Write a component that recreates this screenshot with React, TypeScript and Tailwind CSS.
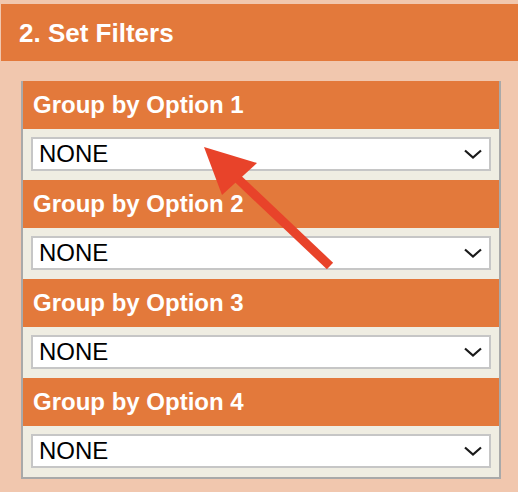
const groups = [1, 2, 3, 4];

function Chevron() {
  return (
    <svg width="18" height="10" viewBox="0 0 18 10" className="shrink-0">
      <path d="M1 1.5 L9 8.5 L17 1.5" fill="none" stroke="#1a1a1a" strokeWidth="2.2" />
    </svg>
  );
}

export default function App() {
  return (
    <div
      className="relative w-[518px] h-[492px] overflow-hidden bg-[#f1c7ae]"
      style={{ fontFamily: '"Liberation Sans", Arial, sans-serif' }}
    >
      <div className="pt-[4px] pl-[1px]">
        <div className="h-[57px] bg-[#e3793b] flex items-center pl-[18px]">
          <h2 className="text-[26px] font-bold text-white leading-none">2. Set Filters</h2>
        </div>
      </div>

      <div className="pt-[20px] pl-[21px]">
        <div className="w-[480px] border-x-2 border-b-2 border-[#a9a9a9]">
          {groups.map((n) => (
            <div key={n}>
              <div className="h-[48px] bg-[#e3793b] flex items-center pl-[10px]">
                <span className="text-[24px] font-bold text-white leading-none">Group by Option {n}</span>
              </div>
              <div className="bg-[#efede2] px-[8px] pt-[8px] pb-[9px]">
                <div className="h-[34px] bg-white border-2 border-[#c6c6c6] flex items-center justify-between pl-[6px] pr-[7px]">
                  <span className="text-[24px] text-black leading-none">NONE</span>
                  <Chevron />
                </div>
              </div>
            </div>
          ))}
        </div>
      </div>

      <svg className="absolute inset-0 pointer-events-none" width="518" height="492" viewBox="0 0 518 492">
        <line x1="330" y1="266" x2="236" y2="177" stroke="#e8432a" strokeWidth="9" />
        <polygon points="204,147 257,163 222,195" fill="#e8432a" />
      </svg>
    </div>
  );
}
